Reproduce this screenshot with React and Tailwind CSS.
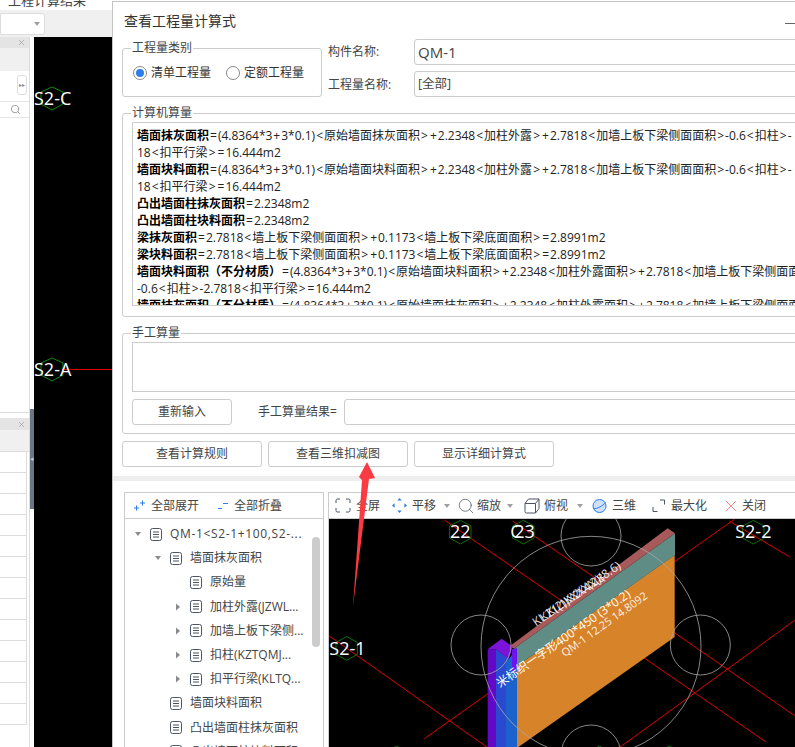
import React from "react";
import { Search, X } from "lucide-react";

const font = { fontFamily: '"Open Sans", "Noto Sans CJK SC", sans-serif' };

const calcLines = [
  ["墙面抹灰面积", "=(4.8364*3+3*0.1)<原始墙面抹灰面积>+2.2348<加柱外露>+2.7818<加墙上板下梁侧面面积>-0.6<扣柱>-"],
  ["", "18<扣平行梁>=16.444m2"],
  ["墙面块料面积", "=(4.8364*3+3*0.1)<原始墙面块料面积>+2.2348<加柱外露>+2.7818<加墙上板下梁侧面面积>-0.6<扣柱>-"],
  ["", "18<扣平行梁>=16.444m2"],
  ["凸出墙面柱抹灰面积", "=2.2348m2"],
  ["凸出墙面柱块料面积", "=2.2348m2"],
  ["梁抹灰面积", "=2.7818<墙上板下梁侧面面积>+0.1173<墙上板下梁底面面积>=2.8991m2"],
  ["梁块料面积", "=2.7818<墙上板下梁侧面面积>+0.1173<墙上板下梁底面面积>=2.8991m2"],
  ["墙面块料面积（不分材质）", "=(4.8364*3+3*0.1)<原始墙面块料面积>+2.2348<加柱外露面积>+2.7818<加墙上板下梁侧面面积>"],
  ["", "-0.6<扣柱>-2.7818<扣平行梁>=16.444m2"],
  ["墙面抹灰面积（不分材质）", "=(4.8364*3+3*0.1)<原始墙面抹灰面积>+2.2348<加柱外露面积>+2.7818<加墙上板下梁侧面面积>"],
];

const treeRows = [
  { depth: 0, caret: "down", label: "QM-1<S2-1+100,S2-..." },
  { depth: 1, caret: "down", label: "墙面抹灰面积" },
  { depth: 2, label: "原始量" },
  { depth: 2, caret: "right", label: "加柱外露(JZWL..." },
  { depth: 2, caret: "right", label: "加墙上板下梁侧..." },
  { depth: 2, caret: "right", label: "扣柱(KZTQMJ..." },
  { depth: 2, caret: "right", label: "扣平行梁(KLTQ..." },
  { depth: 1, label: "墙面块料面积" },
  { depth: 1, label: "凸出墙面柱抹灰面积" },
  { depth: 1, label: "凸出墙面柱块料面积" },
];

// the operators sit wider in the original font, so give them a little room
function Formula({ text }) {
  return text.split(/([=+<>])/).map((part, i) =>
    /^[=+<>]$/.test(part) ? <span key={i} className="mx-[1px]">{part}</span> : part
  );
}

function GroupBox({ title, className, children }) {
  return (
    <div className={`relative border border-[#cccccc] rounded-[3px] ${className}`}>
      <span className="absolute left-[8px] -top-[9px] bg-white px-[1px] text-[12px] leading-[16px] text-[#444444]">{title}</span>
      {children}
    </div>
  );
}

function Btn({ children, className }) {
  return (
    <button className={`h-[26px] border border-[#cccccc] rounded-[3px] bg-white text-[12px] text-[#444444] ${className}`}>
      {children}
    </button>
  );
}

function Radio({ checked, label }) {
  return (
    <div className="flex items-center gap-[4px]">
      <span className="w-[14px] h-[14px] rounded-full border border-[#8a8a8a] flex items-center justify-center">
        {checked && <span className="w-[8px] h-[8px] rounded-full bg-[#2b7de9]" />}
      </span>
      <span className="text-[12px] text-[#333333]">{label}</span>
    </div>
  );
}

function DocIcon() {
  return (
    <svg width="12" height="13" viewBox="0 0 12 13" className="shrink-0" fill="none" stroke="#4b5563" strokeWidth="1">
      <rect x="0.5" y="0.5" width="11" height="12" rx="2" />
      <path d="M3 4h6M3 6.5h6M3 9h6" />
    </svg>
  );
}

function Caret({ dir }) {
  if (dir === "down") {
    return (
      <svg width="8" height="8" viewBox="0 0 8 8" className="shrink-0">
        <path d="M1 2h6L4 6z" fill="#8a8a8a" />
      </svg>
    );
  }
  if (dir === "right") {
    return (
      <svg width="8" height="8" viewBox="0 0 8 8" className="shrink-0">
        <path d="M2 0.5v7L6 4z" fill="#8a8a8a" />
      </svg>
    );
  }
  return <span className="w-[8px] shrink-0" />;
}

function ToolCaret() {
  return (
    <svg width="6" height="4" viewBox="0 0 6 4" className="shrink-0">
      <path d="M0 0h6L3 4z" fill="#a0a0a0" />
    </svg>
  );
}

function Toolbar() {
  return (
    <div className="h-[27px] border-t border-b border-[#cccccc] flex items-center pl-[6px] text-[12px] text-[#444444] whitespace-nowrap bg-white">
      <svg width="16" height="15" viewBox="0 0 16 15" fill="none" stroke="#4b5563" strokeWidth="1" className="shrink-0">
        <path d="M1 5V2.5A1.5 1.5 0 0 1 2.5 1H5M11 1h2.5A1.5 1.5 0 0 1 15 2.5V5M15 10v2.5a1.5 1.5 0 0 1-1.5 1.5H11M5 14H2.5A1.5 1.5 0 0 1 1 12.5V10" />
      </svg>
      <span className="ml-[5px]">全屏</span>
      <svg width="15" height="15" viewBox="0 0 15 15" fill="#2b7de9" className="ml-[12px] shrink-0">
        <path d="M7.5 0l2.2 2.6H5.3zM7.5 15l-2.2-2.6h4.4zM0 7.5l2.6-2.2v4.4zM15 7.5l-2.6 2.2V5.3z" />
      </svg>
      <span className="ml-[5px]">平移</span>
      <span className="ml-[8px]"><ToolCaret /></span>
      <Search size={18} strokeWidth={1} color="#4b5563" className="ml-[7px] shrink-0" />
      <span className="ml-[2px]">缩放</span>
      <span className="ml-[6px]"><ToolCaret /></span>
      <svg width="16" height="16" viewBox="0 0 16 16" fill="none" stroke="#4b5563" strokeWidth="1" className="ml-[11px] shrink-0">
        <path d="M1 5.5L4.5 1H15v9.5L11.5 15H2.5A1.5 1.5 0 0 1 1 13.5zM1 5.5h10.5V15M11.5 5.5L15 1" />
      </svg>
      <span className="ml-[4px]">俯视</span>
      <span className="ml-[9px]"><ToolCaret /></span>
      <svg width="15" height="14" viewBox="0 0 15 14" className="ml-[9px] shrink-0">
        <circle cx="7.5" cy="7" r="6.5" fill="#cfe0f8" stroke="#2b7de9" />
        <path d="M1.5 9.5C5 10 11 7 13.5 3.5" fill="none" stroke="#2b7de9" />
      </svg>
      <span className="ml-[5px]">三维</span>
      <svg width="13" height="13" viewBox="0 0 13 13" fill="none" stroke="#4b5563" strokeWidth="1" className="ml-[16px] shrink-0">
        <path d="M8 1h4.5v4.5M1 8v4.5h4.5" />
      </svg>
      <span className="ml-[6px]">最大化</span>
      <X size={18} strokeWidth={1} color="#f0635c" className="ml-[15px] shrink-0" />
      <span className="ml-[2px]">关闭</span>
    </div>
  );
}

function Scene() {
  return (
    <svg viewBox="9 99 1401 687" className="block w-[467px] h-[229px]" style={{ fontFamily: '"Open Sans", "Noto Sans CJK SC", sans-serif' }}>
      <rect x="9" y="99" width="1401" height="687" fill="#000000" />
      <g stroke="#e00000" strokeWidth="3" fill="none">
        <path d="M355 102L1320 768" />
        <path d="M560 105L1410 692" />
        <path d="M1210 105L1390 212" />
        <path d="M10 450L485 785" />
        <path d="M295 758L1225 100" />
        <path d="M880 785L1410 400" />
      </g>
      <polygon points="573,540 1046,207 1046,453 573,786" fill="#e0882c" fillOpacity="0.96" />
      <polygon points="565,487 1047,142 1047,207 573,540" fill="#5f8d86" />
      <polygon points="545,485 1025,127 1047,142 565,487" fill="#a85a5a" />
      <polygon points="485,490 510,490 510,786 485,786" fill="#6308c4" />
      <polygon points="510,490 550,520 573,487 573,786 510,786" fill="#2a48d0" />
      <polygon points="540,530 573,487 573,786 540,786" fill="#1c62cc" />
      <polygon points="558,490 573,487 573,545 558,560" fill="#6a14f0" />
      <polygon points="485,490 527,458 560,482 548,520 510,490" fill="#7d12d8" />
      <g stroke="#a8a8a8" strokeWidth="2.4" fill="none">
        <circle cx="795" cy="481" r="330" />
        <circle cx="795" cy="150" r="90" />
        <circle cx="465" cy="477" r="90" />
        <circle cx="1123" cy="477" r="90" />
        <circle cx="795" cy="807" r="90" />
      </g>
      <g stroke="#0f8a0f" strokeWidth="2.4" fill="none">
        <polygon points="403,103 435,120 435,156 403,174 371,156 371,120" />
        <polygon points="592,103 624,120 624,156 592,174 560,156 560,120" />
        <polygon points="1282,103 1314,120 1314,156 1282,174 1250,156 1250,120" />
        <polygon points="62,452 94,469 94,505 62,523 30,505 30,469" />
        <polygon points="212,780 244,797 180,797" />
        <polygon points="820,780 852,797 788,797" />
        <polygon points="1030,780 1062,797 998,797" />
      </g>
      <g fill="#ffffff" fontSize="54">
        <text x="403" y="157" textAnchor="middle">22</text>
        <text x="553" y="157">C</text>
        <text x="565" y="157">23</text>
        <text x="1282" y="157" textAnchor="middle">S2-2</text>
        <text x="10" y="507">S2-1</text>
      </g>
      <g fill="#ffffff" fontSize="36" fillOpacity="0.9">
        <text transform="translate(630 422) rotate(-34.5)">KL K(2)KXXX(2)(8.6)</text>
        <text transform="translate(652 408) rotate(-34.5)" fontSize="34">KZ1(1)X2X4X(8</text>
      </g>
      <g fill="#ffffff" fontSize="36">
        <text transform="translate(522 606) rotate(-35)">米标织一字形400*450 (3*0.2)</text>
      </g>
      <g fill="#ffffff" fontSize="33" fillOpacity="0.9">
        <text transform="translate(716 514) rotate(-35.5)">QM-1 12.25 14.8092</text>
      </g>
    </svg>
  );
}

function LeftPane() {
  return (
    <div className="w-[30px] shrink-0 h-[710px] overflow-hidden bg-white border-r border-[#dddddd] flex flex-col">
      <div className="h-[11px] bg-[#e4e4e4] flex justify-end items-center pr-[1px] shrink-0">
        <X size={9} strokeWidth={1.5} color="#909090" className="mr-[2px]" />
      </div>
      <div className="h-[23px] bg-[#f0f0f0] shrink-0" />
      <div className="h-[31px] border-b border-[#e4e4e4] flex justify-end items-start pt-[4px] pr-[2px] shrink-0">
        <span className="w-[10px] h-[20px] border border-[#dddddd] rounded-[3px] text-[6px] leading-[18px] text-[#888888] text-center">▸▸</span>
      </div>
      <div className="h-[16px] border-b border-[#e4e4e4] flex justify-end items-center pr-[8px] shrink-0">
        <Search size={11} color="#999999" />
      </div>
      <div className="h-[295px] border-b border-[#dddddd] shrink-0" />
      <div className="h-[5px] shrink-0" />
      <div className="h-[12px] bg-[#e4e4e4] flex justify-end items-center shrink-0">
        <X size={9} strokeWidth={1.5} color="#909090" className="mr-[3px]" />
      </div>
      <div className="h-[22px] bg-[#f0f0f0] border-b border-[#dddddd] shrink-0" />
      <div className="w-[27px] border-r border-[#dddddd]">
        {Array.from({ length: 13 }).map((_, i) => (
          <div key={i} className="h-[21px] border-b border-[#dddddd]" />
        ))}
      </div>
    </div>
  );
}

function Background() {
  return (
    <div className="w-[112px] shrink-0 flex flex-col overflow-hidden">
      <div className="h-[10px] bg-white overflow-hidden shrink-0">
        <div className="-mt-[8px] pl-[8px] text-[13px] leading-[16px] text-[#444444] whitespace-nowrap">工程计算结果</div>
      </div>
      <div className="h-[27px] bg-[#f0f0f0] shrink-0 flex items-center">
        <div className="w-[45px] h-[22px] bg-white border border-[#dddddd] rounded-r-[3px] flex items-center justify-end pr-[4px]">
          <ToolCaret />
        </div>
      </div>
      <div className="flex">
        <LeftPane />
        <div className="w-[4px] shrink-0 bg-white">
          <div className="h-[372px]" />
          <div className="h-[100px] bg-[#6b7684] flex items-center justify-center text-[7px] text-[#c8c8c8]">◂</div>
        </div>
        <svg width="78" height="710" viewBox="34 37 78 710" className="block shrink-0 bg-black" style={{ fontFamily: '"Open Sans", sans-serif' }}>
          <polygon points="52,87 63,92 63,104 52,110 41,104 41,92" fill="none" stroke="#0f8a0f" />
          <polygon points="52,358 63,363 63,375 52,381 41,375 41,363" fill="none" stroke="#0f8a0f" />
          <path d="M62 369.5H112" stroke="#e00000" />
          <text x="34" y="105" fontSize="18" fill="#ffffff">S2-C</text>
          <text x="34" y="376" fontSize="18" fill="#ffffff">S2-A</text>
        </svg>
      </div>
    </div>
  );
}

export default function App() {
  return (
    <div className="relative w-[795px] h-[747px] overflow-hidden flex bg-white" style={font}>
      <Background />
      <div className="flex-1 min-w-0 pt-[1px] bg-white overflow-hidden">
        <div className="h-[746px] w-[683px] border-t border-l border-[#c4c4c4] overflow-hidden">
          <div className="h-[37px] relative pl-[11px] flex items-center text-[14px] text-[#333333]">
            查看工程量计算式
            <span className="absolute right-0 top-[21px] w-[10px] h-[1px] bg-[#666666]" />
          </div>

          <div className="w-[800px] pl-[9px] flex items-end">
            <GroupBox title="工程量类别" className="w-[200px] h-[49px] flex items-center pl-[10px] gap-[15px]">
              <Radio checked label="清单工程量" />
              <Radio label="定额工程量" />
            </GroupBox>
            <div className="ml-[6px] flex flex-col gap-[6px]">
              <div className="flex items-center">
                <span className="w-[86px] text-[12px] text-[#444444]">构件名称:</span>
                <div className="w-[420px] h-[26px] border border-[#cccccc] rounded-[3px] pl-[3px] flex items-center text-[15px] text-[#444444]">QM-1</div>
              </div>
              <div className="flex items-center">
                <span className="w-[86px] pt-[1px] text-[12px] text-[#444444]">工程量名称:</span>
                <div className="w-[420px] h-[26px] border border-[#cccccc] rounded-[3px] pl-[3px] pt-[1px] flex items-center text-[12.5px] text-[#444444]">[全部]</div>
              </div>
            </div>
          </div>

          <GroupBox title="计算机算量" className="ml-[9px] mt-[16px] w-[800px] h-[204px] pl-[9px] pt-[8px]">
            <div className="h-[184px] w-[780px] border border-[#cccccc] overflow-hidden pl-[4px] pt-[4px] text-[12px] leading-[17px] text-[#222222] whitespace-nowrap">
              {calcLines.map(([bold, rest], i) => (
                <div key={i}>
                  {bold && <span className="font-bold text-black">{bold}</span>}
                  <Formula text={rest} />
                </div>
              ))}
            </div>
          </GroupBox>

          <GroupBox title="手工算量" className="ml-[9px] mt-[16px] w-[800px] h-[101px] pl-[9px] pt-[8px]">
            <div className="h-[50px] w-[780px] border border-[#cccccc]" />
            <div className="mt-[7px] flex items-center">
              <Btn className="w-[100px]">重新输入</Btn>
              <span className="ml-[26px] w-[86px] text-[12px] text-[#444444]">手工算量结果=</span>
              <div className="w-[500px] h-[26px] border border-[#cccccc] rounded-[3px]" />
            </div>
          </GroupBox>

          <div className="ml-[9px] mt-[7px] flex gap-[6px]">
            <Btn className="w-[140px]">查看计算规则</Btn>
            <Btn className="w-[140px]">查看三维扣减图</Btn>
            <Btn className="w-[140px]">显示详细计算式</Btn>
          </div>

          <div className="mt-[9px] h-[5px] bg-[#eeeeee]" />

          <div className="pt-[11px] pl-[11px] flex gap-[4px]">
            <div className="relative w-[200px] h-[260px] border border-[#cccccc] overflow-hidden shrink-0">
              <div className="h-[26px] border-b border-[#cccccc] flex items-center pl-[9px] text-[12px] text-[#444444]">
                <svg width="11" height="11" viewBox="0 0 11 11" fill="none" stroke="#2b7de9" className="shrink-0">
                  <path d="M0 8h5M2.5 5.5v5M6 3h5M8.5 0.5v5" />
                </svg>
                <span className="ml-[6px]">全部展开</span>
                <svg width="10" height="8" viewBox="0 0 10 8" fill="none" stroke="#2b7de9" className="ml-[19px] shrink-0">
                  <path d="M0 6.5h4M5 1.5h5" />
                </svg>
                <span className="ml-[6px]">全部折叠</span>
              </div>
              <div className="pt-[3px] text-[12px] text-[#444444]">
                {treeRows.map((r, i) => (
                  <div key={i} className={`h-[24.2px] flex items-center whitespace-nowrap ${r.depth === 0 ? "pl-[9px] tracking-[0.65px]" : r.depth === 1 ? "pl-[29px]" : "pl-[49px]"}`}>
                    <Caret dir={r.caret} />
                    <span className="ml-[8px]"><DocIcon /></span>
                    <span className="ml-[8px]">{r.label}</span>
                  </div>
                ))}
              </div>
              <div className="absolute left-[187px] top-[44px] w-[8px] h-[110px] rounded-full bg-[#cccccc]" />
            </div>
            <div className="flex-1 min-w-0 w-[467px] border-l border-[#cccccc]">
              <Toolbar />
              <Scene />
            </div>
          </div>
        </div>
      </div>

      {/* red annotation arrow on top of the dialog */}
      <svg width="795" height="747" viewBox="0 0 795 747" className="absolute left-0 top-0 pointer-events-none">
        <polygon points="367,462 375,478 369,479 353,606 362,480 359,477" fill="#fb3b44" />
      </svg>
    </div>
  );
}
